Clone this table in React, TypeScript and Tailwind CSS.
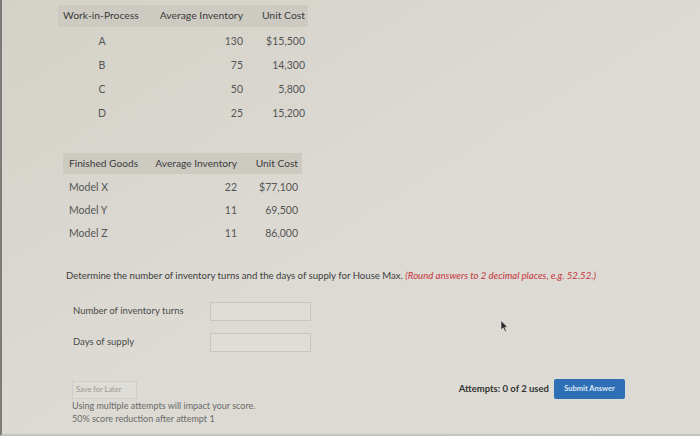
const WIP = [
  { item: 'A', avg: '130', cost: '$15,500' },
  { item: 'B', avg: '75', cost: '14,300' },
  { item: 'C', avg: '50', cost: '5,800' },
  { item: 'D', avg: '25', cost: '15,200' },
];

const FINISHED = [
  { item: 'Model X', avg: '22', cost: '$77,100' },
  { item: 'Model Y', avg: '11', cost: '69,500' },
  { item: 'Model Z', avg: '11', cost: '86,000' },
];

function Cursor() {
  return (
    <svg className="absolute left-[498px] top-[320px]" width="8" height="12" viewBox="0 0 8 12">
      <path d="M1 0.5 L1 10 L3.3 7.8 L5 11.5 L6.4 10.9 L4.8 7.3 L7.6 7.3 Z" fill="#2a2a2a" stroke="#e8e8e8" strokeWidth="0.6" />
    </svg>
  );
}

export default function App() {
  return (
    <div
      className="relative w-[700px] h-[436px] overflow-hidden border-l-2 border-b-2 border-l-[#7c7b78] border-b-[#c6c4be] bg-gradient-to-br from-[#d4d1c8] via-[#dcdad3] to-[#dddbd5] text-[#555] font-['Lato','Liberation_Sans',sans-serif]"
    >
      {/* work-in-process table */}
      <div className="ml-[56px] mt-[5px] w-[250px]">
        <div className="grid grid-cols-[88px_102px_60px] h-[22px] items-center whitespace-nowrap bg-[#cdcac2] text-[10.4px] text-[#3c3c3c]">
          <div className="pl-[5px]">Work-in-Process</div>
          <div className="text-right pr-[5px]">Average Inventory</div>
          <div className="text-right pr-[3px]">Unit Cost</div>
        </div>
        <div className="pt-[3px]">
          {WIP.map((r) => (
            <div key={r.item} className="grid grid-cols-[88px_102px_60px] h-[24px] items-center text-[10.5px]">
              <div className="text-center">{r.item}</div>
              <div className="text-right pr-[5px]">{r.avg}</div>
              <div className="text-right pr-[3px]">{r.cost}</div>
            </div>
          ))}
        </div>
      </div>

      {/* finished goods table */}
      <div className="ml-[61px] mt-[27px] w-[239px]">
        <div className="grid grid-cols-[87px_92px_60px] h-[21px] items-center whitespace-nowrap bg-[#cdcac2] text-[10.2px] text-[#3c3c3c]">
          <div className="pl-[6px]">Finished Goods</div>
          <div className="text-right pr-[5px]">Average Inventory</div>
          <div className="text-right pr-[4px]">Unit Cost</div>
        </div>
        <div className="pt-[2px]">
          {FINISHED.map((r) => (
            <div key={r.item} className="grid grid-cols-[87px_92px_60px] h-[23px] items-center text-[10.5px]">
              <div className="pl-[6px]">{r.item}</div>
              <div className="text-right pr-[5px]">{r.avg}</div>
              <div className="text-right pr-[4px]">{r.cost}</div>
            </div>
          ))}
        </div>
      </div>

      {/* question */}
      <p className="ml-[64px] mt-[24px] text-[9.6px] leading-[14px] text-[#3e3e3e]">
        Determine the number of inventory turns and the days of supply for House Max.{' '}
        <span className="italic text-[#c7343c]">(Round answers to 2 decimal places, e.g. 52.52.)</span>
      </p>

      <div className="ml-[71px] mt-[19px] flex flex-col gap-[12px] text-[9.5px] text-[#4a4a4a]">
        <div className="flex items-center">
          <span className="w-[137px]">Number of inventory turns</span>
          <div className="w-[101px] h-[19px] border border-[#c8c6bf] bg-[#dfddd7]" />
        </div>
        <div className="flex items-center">
          <span className="w-[137px]">Days of supply</span>
          <div className="w-[101px] h-[19px] border border-[#c8c6bf] bg-[#dfddd7]" />
        </div>
      </div>

      {/* footer */}
      <div className="ml-[70px] mr-[75px] mt-[27px] flex justify-between items-start">
        <div className="flex flex-col pt-[2px]">
          <div className="w-[65px] h-[18px] border border-[#d0cec7] bg-[#dedcd6] flex items-center pl-[3px] text-[7.5px] text-[#9a9893]">
            Save for Later
          </div>
          <div className="text-[9px] leading-[13px] text-[#6a6a6a]">
            <div>Using multiple attempts will impact your score.</div>
            <div>50% score reduction after attempt 1</div>
          </div>
        </div>
        <div className="flex items-center gap-[5px]">
          <span className="text-[9.5px] font-bold text-[#333]">Attempts: 0 of 2 used</span>
          <button className="w-[71px] h-[20px] rounded-[2px] bg-[#2f6fb5] text-[7.5px] font-bold text-[#dce8f5]">
            Submit Answer
          </button>
        </div>
      </div>

      <Cursor />
    </div>
  );
}
